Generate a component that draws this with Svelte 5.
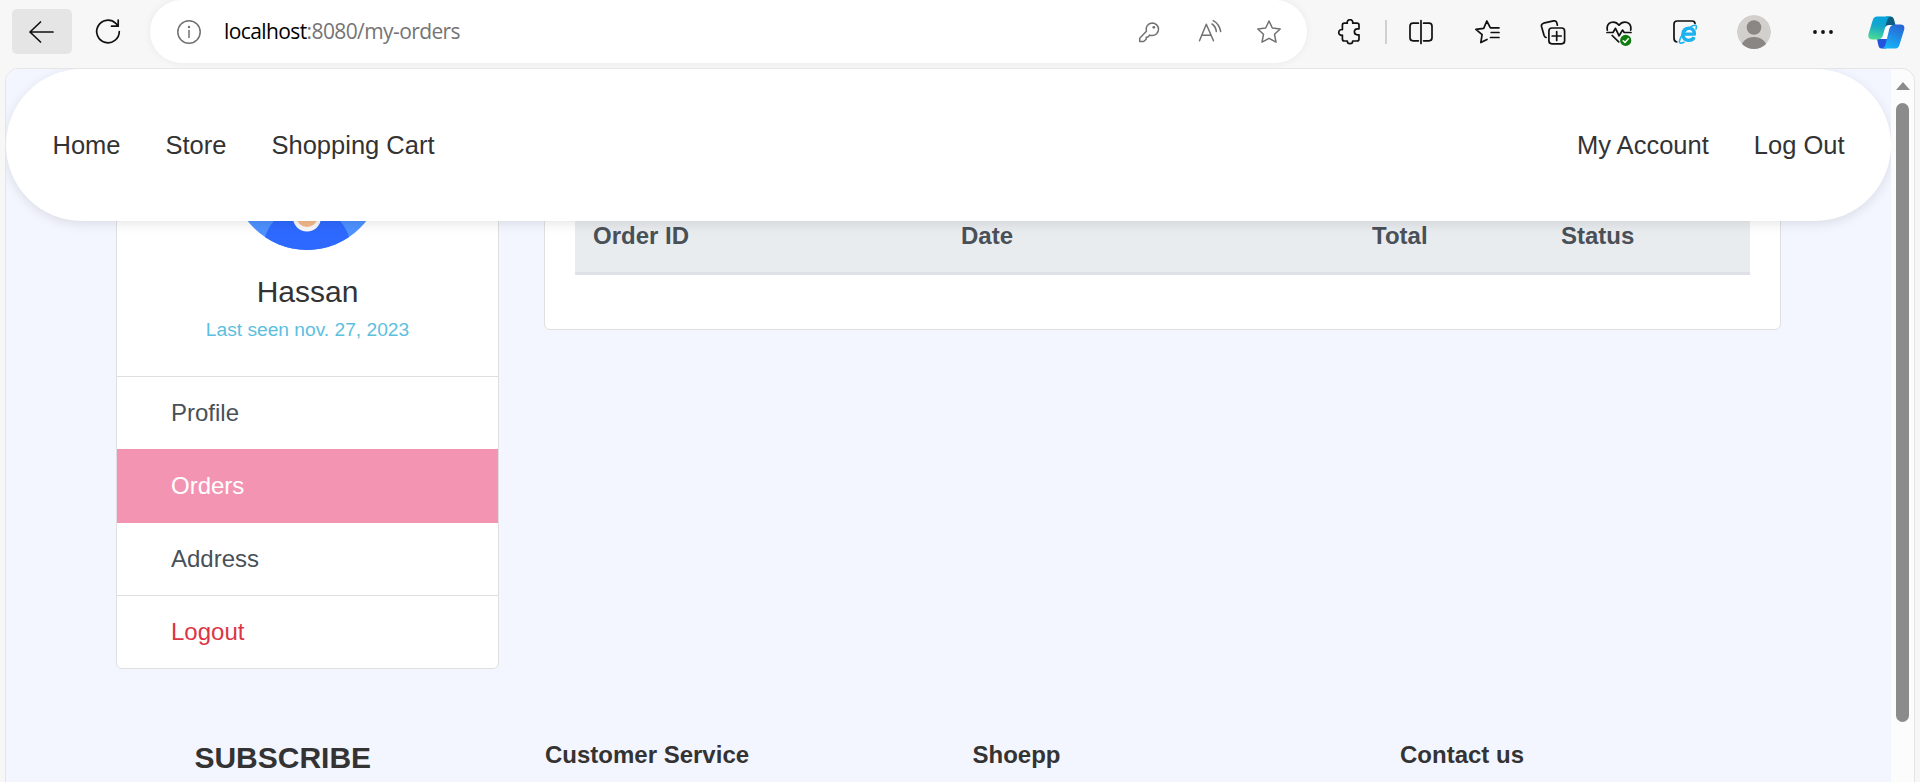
<script>
  const sideItems = [
    { label: 'Profile', kind: '' },
    { label: 'Orders', kind: 'active' },
    { label: 'Address', kind: '' },
    { label: 'Logout', kind: 'danger' }
  ];
  const columns = ['Order ID', 'Date', 'Total', 'Status'];
  const footer = ['Customer Service', 'Shoepp', 'Contact us'];
</script>

<div class="browser">
  <div class="toolbar">
    <button class="back" aria-label="Back">
      <svg width="26" height="24" viewBox="0 0 26 24"><path d="M25 12H2M12.500 2L2 12l10.500 10" /></svg>
    </button>
    <svg class="reload" width="28" height="28" viewBox="0 0 28 28"><path d="M25.300 14.500A11.300 11.300 0 1 1 21.800 6.300L24 9M24.200 3V9.200H17.500" /></svg>

    <div class="address">
      <svg class="info" width="26" height="26" viewBox="0 0 26 26"><circle cx="13" cy="13" r="11.2" /><path d="M13 11.5v7" /><circle class="dot" cx="13" cy="8" r="1.2" /></svg>
      <div class="url"><b>localhost</b>:8080/my-orders</div>
      <svg class="key" width="26" height="26" viewBox="0 0 26 26"><path d="M16.200 4a6.300 6.300 0 0 1 0 12.600q-1.400 0-2.400-.5l-2.200 2.200h-1.400v2l-2.500 2.200H3.700v-3.200l6.700-7a6.300 6.300 0 0 1 5.800-8.300z" /><circle class="dot" cx="17.8" cy="8.300" r="1.400" /></svg>
      <svg class="read" width="26" height="26" viewBox="0 0 26 26"><path d="M2.500 21.800L9.300 5.200l7.200 16.600M4.800 16.200h9.400M15 5q3.800 2.500 4.300 7.500M16.200 1.600q6.200 3.400 7.500 10.900" /></svg>
      <svg width="26" height="26" viewBox="0 0 26 26"><path d="M13 2l3.300 7 7.900 1-5.700 5.300 1.500 7.800-7-3.800-7 3.800 1.500-7.800L1.800 10l7.900-1z" /></svg>
    </div>

    <div class="tools">
      <svg width="26" height="26" viewBox="0 0 26 26"><path d="M6.400 6.200q0-2 2-2h2.900a2.800 2.800 0 1 1 5.400 0H21q2 0 2 2v3.600h-1.600a3 3 0 0 0 0 6H23v4.200q0 2-2 2h-4.300a2.700 2.700 0 0 1-5.400 0H8.400q-2 0-2-2V16.200a2.900 2.900 0 1 1 0-5.600z" /></svg>
      <i></i>
      <svg width="26" height="26" viewBox="0 0 26 26"><path d="M10.400 4.200H5q-3 0-3 3v11.600q0 3 3 3h5.400M15.600 4.200H21q3 0 3 3v11.600q0 3-3 3h-5.400M13 1.500v23" /></svg>
      <svg class="g40" width="26" height="26" viewBox="0 0 26 26"><path d="M13 20.400L6.800 23.600l1.300-7.900L1.900 10.300l7.800-1L12.800 2l3.600 6.800H25M17.200 13.500H25M16.500 18.500H25" /></svg>
      <svg class="g40" width="26" height="26" viewBox="0 0 26 26"><rect x="8.900" y="9" width="15.700" height="15.800" rx="3" /><path d="M16.700 12.500v9M12.200 17h9M17.400 6.200l-.7-2.700q-.8-2.200-3.200-1.600L3.600 4.200Q1 5 1.500 7.500l2.600 9q.6 1.700 2 2" /></svg>
      <svg class="g40" width="26" height="28" viewBox="0 0 26 28"><path d="M1.300 12.200Q.3 6.400 4.800 4.500 9.800 3 13 7.200 16.200 3 21.200 4.500 25.700 6.400 24.700 12.200M1 14.500h6l2.500-4.200 3.600 7.500 3.400-5.700 1.700 2.400H25M6.200 17.500l6.500 6.300" /><circle cx="19.700" cy="22.400" r="5.600" class="ok" /><path d="M17.200 22.700l1.800 1.700 3.300-3.700" class="tick" /></svg>
      <svg class="g40" width="26" height="26" viewBox="0 0 26 26"><path d="M4.800 23Q2 22.600 2 19V5q0-3 3.200-3H20q2.800 0 3 2.500" /><path d="M11.500 15.200h11Q22.300 9.300 16.500 9.200q-5.500.3-5.600 6.200.3 5.700 5.600 5.900 4.500 0 5.600-3.200" class="ie" /><path d="M12 23.300q-4.800 2.200-4.600-1Q8.500 16.500 15 10.600q7.500-5.600 9.200-3.800.6.900-.2 3.200" class="orbit" /></svg>
      <svg class="g39" width="34" height="34" viewBox="0 0 34 34"><defs><clipPath id="avatar-clip"><circle cx="17" cy="17" r="17" /></clipPath></defs><g clip-path="url(#avatar-clip)" class="avatar"><circle cx="17" cy="17" r="17" fill="#d2d0cd" /><circle cx="17" cy="12.5" r="7.300" fill="#8a8683" /><ellipse cx="17" cy="33" rx="13" ry="11" fill="#8a8683" /></g></svg>
      <svg class="g39" width="26" height="26" viewBox="0 0 26 26"><g class="fill"><circle cx="5" cy="13" r="1.900" /><circle cx="13" cy="13" r="1.900" /><circle cx="21" cy="13" r="1.900" /></g></svg>
      <svg class="g32" width="37" height="34" viewBox="0 0 37 34">
        <defs>
          <linearGradient id="cp-left" x1=".5" y1="0" x2=".3" y2="1"><stop stop-color="#06a4dc" /><stop offset=".4" stop-color="#14a6cc" /><stop offset="1" stop-color="#4bdc92" /></linearGradient>
          <linearGradient id="cp-right" x1=".7" y1="0" x2=".3" y2="1"><stop stop-color="#2766d4" /><stop offset="1" stop-color="#17b4f8" /></linearGradient>
        </defs>
        <g class="logo">
          <path d="M19 10h6l-5 15h-9z" fill="#fff" />
          <path d="M18 1.500h4.500q2.700 0 3.500 3l1.500 5.500h-6q-3.500 0-5 3z" fill="#0c5d80" />
          <path d="M9 24h11l-2 9.500h-4.500q-2.500 0-3.200-3.500z" fill="#2453dc" />
          <path d="M9 1.500h14q-3 .5-4 4l-3.800 14Q14 24.500 9.500 24.500H4.500q-5 0-4-5.500L4.700 5.200Q5.800 1.500 9 1.500z" fill="url(#cp-left)" />
          <path d="M27.500 33.500H13.500q3-.5 4-4l3.800-15.500q1.200-4.500 5.700-4.500h5.500q4.700 0 3.700 5l-4.700 15.300q-1 3.700-4 3.700z" fill="url(#cp-right)" />
        </g>
      </svg>
    </div>
  </div>

  <div class="window">
    <div class="page">
      <header>
        <nav><span>Home</span><span>Store</span><span>Shopping Cart</span></nav>
        <nav><span>My Account</span><span>Log Out</span></nav>
      </header>

      <main>
        <aside>
          <div class="profile">
            <svg width="150" height="150" viewBox="0 0 150 150">
              <defs><clipPath id="photo-clip"><circle cx="75" cy="75" r="75" /></clipPath></defs>
              <g clip-path="url(#photo-clip)">
                <path d="M0 0h150v150H0z" fill="#4e91ff" />
                <circle cx="75" cy="150" r="44" fill="#2e69ff" />
                <circle cx="75" cy="117.500" r="14" fill="#f8f8fa" />
                <circle cx="75" cy="116.500" r="10.500" fill="#f5b98b" />
              </g>
            </svg>
            <h5>Hassan</h5>
            <div class="seen">Last seen nov. 27, 2023</div>
          </div>
          {#each sideItems as item}
            <div class="item {item.kind}">{item.label}</div>
          {/each}
        </aside>
        <section class="card">
          <div class="thead">
            {#each columns as c}<div>{c}</div>{/each}
          </div>
        </section>
      </main>

      <footer>
        <h3>SUBSCRIBE</h3>
        <div class="links">
          {#each footer as f}<div class="col">{f}</div>{/each}
        </div>
      </footer>
    </div>
    <div class="scroll">
      <div class="up"></div>
      <div class="thumb"></div>
    </div>
  </div>
</div>

<style>
  :global(body) { margin: 0; overflow: hidden; background: #f7f7f7; }
  * { box-sizing: border-box; }
  .browser { width: 1920px; height: 782px; overflow: hidden; display: flex; flex-direction: column; background: #f7f7f7; font-family: "Liberation Sans", Arial, sans-serif; color: #333; }
  svg { flex: none; display: block; fill: none; stroke: #111; stroke-width: 1.7; stroke-linecap: round; stroke-linejoin: round; }

  .toolbar { flex: none; height: 68px; display: flex; align-items: flex-start; padding-left: 12px; }
  .back { width: 60px; height: 45px; margin-top: 9px; border: 0; padding: 0 2px 0 0; border-radius: 5px; background: #e5e5e5; display: flex; align-items: center; justify-content: center; }
  .reload { margin: 17px 28px 0 22px; }
  .address { width: 1157px; height: 63px; border-radius: 32px; background: #fff; box-shadow: 0 0 9px rgba(0, 0, 0, .06); display: flex; align-items: center; padding-left: 26px; }
  .address svg { stroke: #717171; stroke-width: 1.5; }
  .address .info { margin-right: 22px; }
  .address .key { margin-right: 35px; }
  .address .read { margin-right: 33px; }
  .address .dot { fill: #717171; stroke: none; }
  .url { width: 912px; padding-bottom: 1px; font: 21px "Open Sans", "Noto Sans", sans-serif; letter-spacing: -.6px; color: #757575; white-space: nowrap; }
  .url b { font-weight: 400; color: #000; }
  .tools { flex: 1; height: 63px; display: flex; align-items: center; padding-left: 29px; }
  .tools i { width: 2px; height: 24px; margin: 0 21px 0 23px; background: #d0d0d0; }
  .g40 { margin-left: 40px; }
  .g39 { margin-left: 39px; }
  .g32 { margin-left: 32px; }
  .ok { fill: #107c10; stroke: none; }
  .tick { stroke: #fff; stroke-width: 1.5; }
  .ie { stroke: #1cb2f0; stroke-width: 3.3; stroke-linecap: butt; }
  .orbit { stroke: #1cb2f0; stroke-width: 1.6; }
  .avatar, .logo { stroke: none; }
  .fill { fill: #111; stroke: none; }

  .window { flex: none; width: 1910px; height: 730px; margin-left: 5px; border: 1px solid #e5e5e5; border-radius: 13px 13px 0 0; overflow: hidden; display: flex; background: #fcfcfc; }
  .page { width: 1885px; height: 730px; overflow: hidden; background: #f3f6ff; }
  header { position: relative; z-index: 2; height: 152px; border-radius: 76px; background: #fff; box-shadow: 0 3px 12px rgba(0, 0, 0, .1); display: flex; justify-content: space-between; padding: 0 46.5px; font-size: 25.5px; }
  nav { display: flex; gap: 45px; align-items: center; }

  main { display: flex; align-items: flex-start; gap: 45px; padding-left: 110px; }
  aside, .card { background: #fff; border: 1px solid #dfdfdf; border-radius: 6px; }
  aside { width: 383px; height: 568px; margin-top: -120px; overflow: hidden; }
  .profile { height: 274px; display: flex; flex-direction: column; align-items: center; }
  .profile svg { margin: -2px 2px 0 0; stroke: none; }
  h5 { margin: 24px 0 0; font-weight: 400; font-size: 30px; line-height: 36px; }
  .seen { margin-top: 5px; font-size: 19.2px; line-height: 29px; color: #5bc0de; }
  .item { height: 73px; padding-left: 54px; border-top: 1px solid #dfdfdf; font-size: 24px; line-height: 72px; color: #495057; }
  .active { height: 74px; margin-bottom: -1px; position: relative; background: #f395b2; border-color: #f395b2; color: #fff; }
  .danger { color: #dc3545; }
  .card { width: 1237px; height: 229px; margin-top: -120px; padding: 83px 30px 0; }
  .thead { display: grid; grid-template-columns: 368px 411px 189px 1fr; height: 90px; background: #e9ecef; border-bottom: 3px solid #dee2e6; padding: 33px 0 0 18px; font-weight: 700; font-size: 24px; line-height: 36px; color: #495057; }

  footer { display: flex; padding: 69px 0 0 188.4px; }
  h3 { width: 350.6px; margin: 0; font-size: 30px; line-height: 40px; }
  .links { display: grid; grid-template-columns: repeat(3, 381px); gap: 46.5px; font-weight: 700; font-size: 24px; }
  .col { height: 45px; line-height: 34px; border-bottom: 1px solid #fff; }

  .scroll { width: 23px; display: flex; flex-direction: column; align-items: center; }
  .up { margin-top: 13px; border: 7.5px solid transparent; border-top: 0; border-bottom: 8px solid #8b8b8b; }
  .thumb { width: 13px; height: 619px; margin-top: 13px; border-radius: 7px; background: #8b8b8b; }
</style>
